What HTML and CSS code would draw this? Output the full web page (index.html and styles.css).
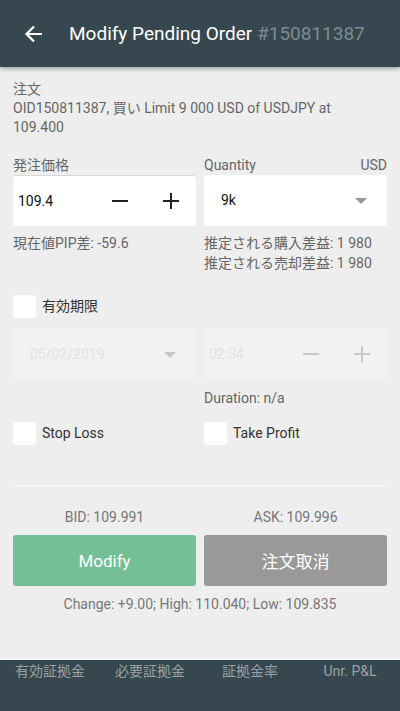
FILE: index.html
```html
<!DOCTYPE html>
<html lang="ja">
<head>
    <meta charset="UTF-8">
    <meta name="viewport" content="width=device-width, initial-scale=1.0">
    <title>Modify Pending Order</title>
    <link rel="stylesheet" href="styles.css">
</head>
<body>
    <header class="topbar">
        <svg class="back" width="20" height="20" viewBox="0 0 20 20">
            <path d="M18 10H3M10 2.5L2.5 10L10 17.5" fill="none" stroke="#fff" stroke-width="2.2"/>
        </svg>
        <h1 class="title">Modify Pending Order <span class="order-id">#150811387</span></h1>
    </header>

    <main class="content">
        <div class="order-info">
            <div>注文</div>
            <div>OID150811387, 買い Limit 9 000 USD of USDJPY at 109.400</div>
        </div>

        <div class="grid labels">
            <div>発注価格</div>
            <div class="label-split"><span>Quantity</span><span>USD</span></div>
        </div>
        <div class="grid">
            <div class="box stepper price">
                <span class="value">109.4</span>
                <span class="step minus"></span>
                <span class="step plus"></span>
            </div>
            <div class="box dropdown">
                <span class="value">9k</span>
                <span class="caret"></span>
            </div>
        </div>
        <div class="grid hints">
            <div>現在値PIP差: -59.6</div>
            <div>推定される購入差益: 1 980<br>推定される売却差益: 1 980</div>
        </div>

        <label class="check expiry"><span class="checkbox"></span>有効期限</label>

        <div class="grid disabled">
            <div class="box dropdown">
                <span class="value">05/02/2019</span>
                <span class="caret"></span>
            </div>
            <div class="box stepper">
                <span class="value">02:34</span>
                <span class="step minus"></span>
                <span class="step plus"></span>
            </div>
        </div>
        <div class="grid hints duration">
            <div></div>
            <div>Duration: n/a</div>
        </div>

        <div class="grid checks">
            <label class="check"><span class="checkbox"></span>Stop Loss</label>
            <label class="check"><span class="checkbox"></span>Take Profit</label>
        </div>

        <hr class="divider">

        <div class="grid quotes">
            <div>BID: 109.991</div>
            <div>ASK: 109.996</div>
        </div>
        <div class="grid">
            <button class="btn btn-modify">Modify</button>
            <button class="btn btn-cancel">注文取消</button>
        </div>
        <div class="stats">Change: +9.00; High: 110.040; Low: 109.835</div>
    </main>

    <footer class="bottombar">
        <div>有効証拠金</div>
        <div>必要証拠金</div>
        <div>証拠金率</div>
        <div>Unr. P&amp;L</div>
    </footer>
</body>
</html>
```

FILE: styles.css
```css
* {
    box-sizing: border-box;
}

body {
    margin: 0;
    min-height: 100vh;
    display: flex;
    flex-direction: column;
    background-color: #eeeeee;
    font-family: Roboto, "Noto Sans CJK JP", sans-serif;
    font-size: 14px;
    line-height: 19px;
    color: #666;
}

.topbar {
    height: 67px;
    display: flex;
    align-items: center;
    padding-left: 24px;
    background-color: #37474f;
    box-shadow: 0 2px 4px rgba(0, 0, 0, 0.3);
}

.back {
    flex: none;
}

.title {
    margin: 0 0 0 25px;
    font-size: 19px;
    font-weight: normal;
    color: #fff;
}

.order-id {
    color: #7d8b91;
}

.content {
    flex: 1;
    padding: 13px 13px 0;
}

.order-info {
    padding-right: 30px;
}

.grid {
    display: grid;
    grid-template-columns: 1fr 1fr;
    column-gap: 8px;
}

.labels {
    margin-top: 19px;
}

.label-split {
    display: flex;
    justify-content: space-between;
}

.box {
    height: 51px;
    display: flex;
    align-items: center;
    background-color: #fff;
    border-radius: 3px;
    color: #111;
    font-size: 14px;
}

.price {
    border-top: 1px solid #d8d8d8;
}

.stepper {
    padding-left: 5px;
}

.stepper .value {
    flex: 1;
}

.step {
    position: relative;
    width: 51px;
    height: 51px;
}

.step::before,
.step::after {
    content: "";
    position: absolute;
    left: 18px;
    top: 24px;
    width: 16px;
    height: 2px;
    background-color: #222;
}

.plus::after {
    transform: rotate(90deg);
}

.minus::after {
    display: none;
}

.dropdown {
    padding: 0 20px 0 17px;
    justify-content: space-between;
}

.caret {
    width: 0;
    height: 0;
    border-left: 6px solid transparent;
    border-right: 6px solid transparent;
    border-top: 6px solid #999;
}

.hints {
    margin-top: 7px;
    line-height: 20px;
}

.check {
    display: flex;
    align-items: center;
    gap: 6px;
    color: #333;
    font-size: 14px;
}

.checkbox {
    width: 23px;
    height: 23px;
    background-color: #fff;
    border-radius: 3px;
}

.expiry {
    margin-top: 22px;
}

.disabled {
    margin-top: 11px;
}

.disabled .box {
    background-color: #f2f2f2;
    color: #e2e2e2;
}

.disabled .caret {
    border-top-color: #c8c8c8;
}

.disabled .step::before,
.disabled .step::after {
    background-color: #c8c8c8;
}

.duration {
    margin-top: 8px;
}

.checks {
    margin-top: 14px;
}

.divider {
    margin: 40px 0 0;
    border: 0;
    height: 1px;
    background-color: #fff;
}

.quotes {
    margin-top: 22px;
    margin-bottom: 8px;
    text-align: center;
    color: #777;
}

.btn {
    height: 51px;
    border: 0;
    border-radius: 3px;
    font-family: inherit;
    font-size: 17px;
    color: #fff;
}

.btn-modify {
    background-color: #74bf96;
}

.btn-cancel {
    background-color: #999999;
}

.stats {
    margin-top: 9px;
    text-align: center;
    color: #777;
}

.bottombar {
    height: 52px;
    display: grid;
    grid-template-columns: repeat(4, 1fr);
    padding-top: 2px;
    text-align: center;
    background-color: #37474f;
    border-top: 1px solid #fafafa;
    color: #9aa1a5;
}
```
